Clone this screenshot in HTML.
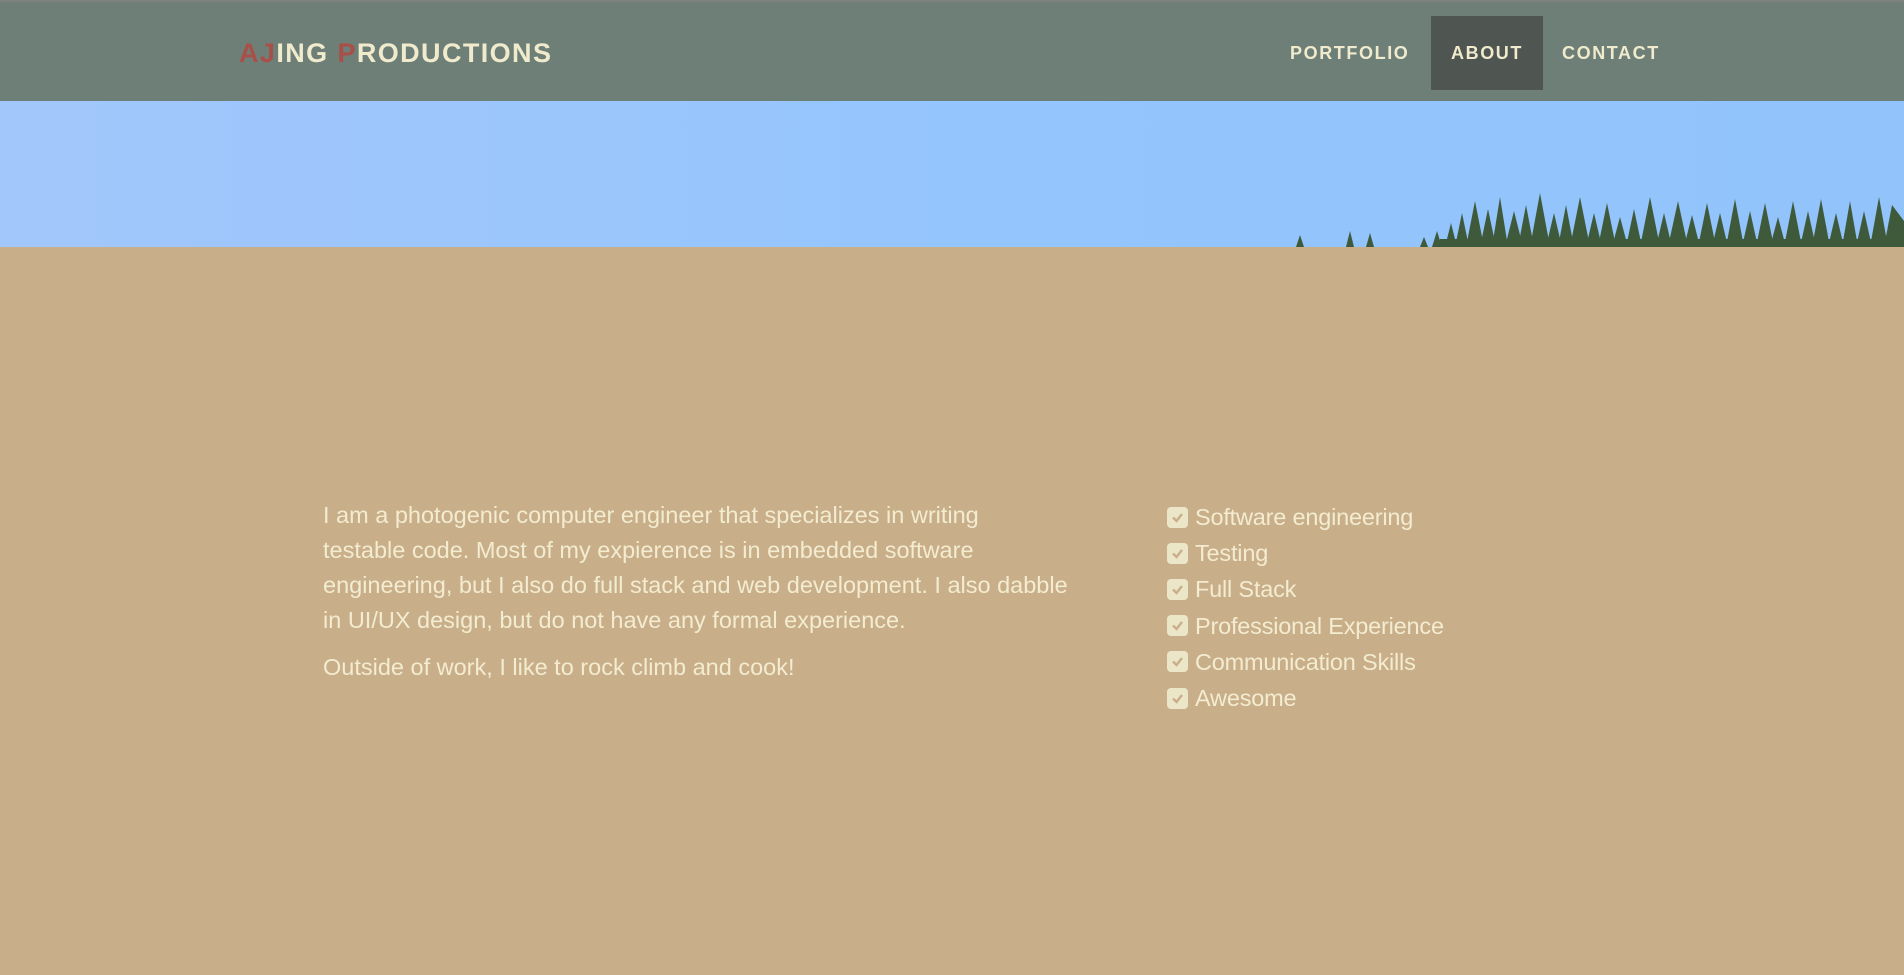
<!DOCTYPE html>
<html><head><meta charset="utf-8"><style>
*{margin:0;padding:0;box-sizing:border-box}
body{width:1904px;height:975px;background:#c8ae89;font-family:"Liberation Sans",sans-serif;position:relative;overflow:hidden}
.hdr{position:absolute;left:0;top:0;width:1904px;height:101px;background:#6e7f78;border-top:2px solid #7d827f}
.logo{position:absolute;left:239px;top:36px;font-size:27px;font-weight:bold;color:#f0ebcc;letter-spacing:1.4px;white-space:nowrap}
.logo span{color:#a94f47}
.nav a{position:absolute;top:14px;height:74px;line-height:74px;font-size:18px;font-weight:bold;color:#f0ebcc;letter-spacing:1.6px;text-decoration:none}
.sky{position:absolute;left:0;top:101px;width:1904px;height:146px;background:linear-gradient(90deg,#a2c7fb,#95c5fd 50%,#92c3fb)}
.txt{position:absolute;left:323px;top:498px;color:#f3ecd0;font-size:23.5px;line-height:35px;white-space:nowrap;letter-spacing:0px}
.txt p{margin-bottom:12px}
ul{position:absolute;left:1167px;top:499px;list-style:none;color:#f3ecd0;font-size:23.5px;line-height:36.2px;letter-spacing:-0.2px}
li{display:flex;align-items:center}
.cb{width:21px;height:21px;background:#ece6c8;border-radius:4px;margin-right:7px;display:inline-flex;align-items:center;justify-content:center}
</style></head><body>
<div class="hdr">
<div class="logo"><span>AJ</span>ING <span>P</span>RODUCTIONS</div>
<div class="nav">
<a style="left:1290px">PORTFOLIO</a>
<a style="left:1431px;width:112px;background:#4f5652;text-align:center">ABOUT</a>
<a style="left:1562px">CONTACT</a>
</div></div>
<div class="sky">
<svg width="1904" height="146" style="position:absolute;left:0;top:0">
<g fill="#3f5a3a">
<polygon points="1296,146 1300,134 1304,146"/><polygon points="1346,146 1350,130 1354,146"/><polygon points="1366,146 1370,132 1374,146"/><polygon points="1420,146 1424,136 1428,146"/>
<polygon points="1432,146 1437,130 1442,146"/><polygon points="1445,146 1451,122 1457,146"/><polygon points="1455,146 1462,112 1469,146"/>
<polygon points="1466,146 1475,100 1484,146"/><polygon points="1480,146 1488,108 1496,146"/><polygon points="1492,146 1500,96 1508,146"/>
<polygon points="1505,146 1514,110 1523,146"/><polygon points="1518,146 1526,104 1534,146"/><polygon points="1530,146 1540,92 1550,146"/>
<polygon points="1546,146 1554,112 1562,146"/><polygon points="1558,146 1566,104 1574,146"/><polygon points="1570,146 1580,96 1590,146"/>
<polygon points="1586,146 1594,112 1602,146"/><polygon points="1598,146 1607,102 1616,146"/><polygon points="1612,146 1620,116 1628,146"/>
<polygon points="1626,146 1634,108 1642,146"/><polygon points="1640,146 1650,96 1660,146"/><polygon points="1656,146 1664,112 1672,146"/>
<polygon points="1668,146 1678,100 1688,146"/><polygon points="1684,146 1692,114 1700,146"/><polygon points="1698,146 1707,102 1716,146"/>
<polygon points="1712,146 1720,112 1728,146"/><polygon points="1726,146 1735,98 1744,146"/><polygon points="1742,146 1750,110 1758,146"/>
<polygon points="1756,146 1765,102 1774,146"/><polygon points="1770,146 1778,116 1786,146"/><polygon points="1784,146 1793,100 1802,146"/>
<polygon points="1800,146 1808,110 1816,146"/><polygon points="1812,146 1821,98 1830,146"/><polygon points="1828,146 1836,112 1844,146"/>
<polygon points="1842,146 1850,100 1858,146"/><polygon points="1856,146 1864,110 1872,146"/><polygon points="1870,146 1879,96 1888,146"/>
<polygon points="1884,146 1892,104 1904,120 1904,146"/>
<rect x="1440" y="138" width="464" height="8"/>
</g></svg>
</div>
<div class="txt">
<p>I am a photogenic computer engineer that specializes in writing<br>testable code. Most of my expierence is in embedded software<br>engineering, but I also do full stack and web development. I also dabble<br>in UI/UX design, but do not have any formal experience.</p>
<p>Outside of work, I like to rock climb and cook!</p>
</div>
<ul>
<li><span class="cb"><svg width="13" height="11" viewBox="0 0 13 11"><path d="M2 5.5l3.5 3.5L11 2" stroke="#c8ae89" stroke-width="2.4" fill="none"/></svg></span>Software engineering</li>
<li><span class="cb"><svg width="13" height="11" viewBox="0 0 13 11"><path d="M2 5.5l3.5 3.5L11 2" stroke="#c8ae89" stroke-width="2.4" fill="none"/></svg></span>Testing</li>
<li><span class="cb"><svg width="13" height="11" viewBox="0 0 13 11"><path d="M2 5.5l3.5 3.5L11 2" stroke="#c8ae89" stroke-width="2.4" fill="none"/></svg></span>Full Stack</li>
<li><span class="cb"><svg width="13" height="11" viewBox="0 0 13 11"><path d="M2 5.5l3.5 3.5L11 2" stroke="#c8ae89" stroke-width="2.4" fill="none"/></svg></span>Professional Experience</li>
<li><span class="cb"><svg width="13" height="11" viewBox="0 0 13 11"><path d="M2 5.5l3.5 3.5L11 2" stroke="#c8ae89" stroke-width="2.4" fill="none"/></svg></span>Communication Skills</li>
<li><span class="cb"><svg width="13" height="11" viewBox="0 0 13 11"><path d="M2 5.5l3.5 3.5L11 2" stroke="#c8ae89" stroke-width="2.4" fill="none"/></svg></span>Awesome</li>
</ul>
</body></html>
